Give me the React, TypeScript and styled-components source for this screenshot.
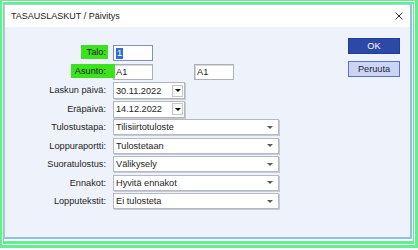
import React from "react";
import styled, { createGlobalStyle, css } from "styled-components";

const GlobalStyle = createGlobalStyle`
  html, body { margin: 0; padding: 0; background: #ffffff; }
  body { font-family: "Liberation Sans", Arial, sans-serif; color: #1e1e1e; }
  * { box-sizing: border-box; }
`;

const FRAME_GREEN = "#62ef8e";

const OuterFrame = styled.div`
  width: 418px;
  height: 248px;
  border-style: solid;
  border-color: ${FRAME_GREEN};
  border-width: 1px 3px 3px 2px;
  padding: 1px;
  background: #ffffff;
  display: flex;
`;

const InnerFrame = styled.div`
  flex: 1;
  display: flex;
  border-style: solid;
  border-color: ${FRAME_GREEN};
  border-width: 2px 1px 3px 1px;
  padding: 0 1px 2px 0;
  background: #ffffff;
`;

const Dialog = styled.div`
  flex: 1;
  display: flex;
  flex-direction: column;
  border-style: solid;
  border-color: #a9cbee #94bde6 #94bde6 #a9cbee;
  border-width: 1px 2px 2px 1px;
  background: #eef2fa;
`;

const TitleBar = styled.div`
  height: 22px;
  flex: none;
  background: #ffffff;
  display: flex;
  align-items: center;
  justify-content: space-between;
  padding: 0 7px 0 6px;
`;

const Title = styled.span`
  font-size: 9px;
  color: #1a1a1a;
`;

const CloseIcon = styled.svg`
  width: 8px;
  height: 8px;
  display: block;
`;

const Content = styled.div`
  flex: 1;
  display: flex;
  justify-content: space-between;
  padding: 0 10px 0 0;
`;

const Form = styled.div`
  margin-top: 18px;
  display: grid;
  grid-template-columns: 103px 166px;
  grid-auto-rows: 16px;
  column-gap: 5px;
  row-gap: 2.5px;
  align-content: start;
`;

const LabelCell = styled.div`
  display: flex;
  justify-content: flex-end;
  align-items: center;
  padding-right: 2px;
  font-size: 9.2px;
  color: #1e1e1e;
  white-space: nowrap;
`;

const Highlight = styled.span<{ $extend: number; $lead: number }>`
  position: relative;
  z-index: 1;
  align-self: flex-start;
  height: 14px;
  line-height: 14px;
  background: #3ce21e;
  padding: 0 ${(p) => p.$extend}px 0 ${(p) => p.$lead}px;
  margin-right: -${(p) => p.$extend}px;
`;

const FieldGroup = styled.div`
  display: flex;
  gap: 41px;
  align-items: flex-start;
`;

const TextBox = styled.div<{ $focused?: boolean }>`
  width: 40px;
  height: 16px;
  background: #ffffff;
  border: 1px solid ${(p) => (p.$focused ? "#7d90c8" : "#aeb0b4")};
  ${(p) =>
    !p.$focused &&
    css`
      box-shadow: inset 1px 1px 0 #d4d6da;
    `}
  display: flex;
  align-items: center;
  padding-left: 2px;
  font-size: 9.2px;
  color: #1e1e1e;
`;

const Selected = styled.span`
  background: #2f6fd6;
  color: #ffffff;
  padding: 0 1px;
  line-height: 11px;
`;

const DateCombo = styled.div`
  width: 72px;
  height: 17px;
  background: #ffffff;
  border: 1px solid #b2b5bb;
  box-shadow: 1px 1px 0 #c9ccd3;
  display: flex;
  align-items: center;
  justify-content: space-between;
  padding: 0 1px 0 2px;
  font-size: 9.2px;
`;

const DropButton = styled.div`
  width: 11px;
  height: 12px;
  border: 1px solid #c4c6ca;
  background: #fbfbfb;
  display: flex;
  align-items: center;
  justify-content: center;
`;

const Caret = styled.span<{ $color: string; $w: number }>`
  width: 0;
  height: 0;
  border-left: ${(p) => p.$w / 2}px solid transparent;
  border-right: ${(p) => p.$w / 2}px solid transparent;
  border-top: ${(p) => Math.round(p.$w / 2)}px solid ${(p) => p.$color};
`;

const SelectBox = styled.div`
  width: 166px;
  height: 16px;
  background: #ffffff;
  border: 1px solid #b6b9c2;
  box-shadow: 1px 1px 0 #c7cad2;
  display: flex;
  align-items: center;
  justify-content: space-between;
  padding: 0 5px 0 2px;
  font-size: 9.2px;
  color: #1e1e1e;
`;

const ButtonColumn = styled.div`
  margin-top: 11px;
  display: flex;
  flex-direction: column;
  gap: 7px;
`;

const Button = styled.div<{ $primary?: boolean }>`
  width: 52px;
  height: 16px;
  display: flex;
  align-items: center;
  justify-content: center;
  font-size: 9.2px;
  ${(p) =>
    p.$primary
      ? css`
          background: #2c49a8;
          border: 1px solid #223c97;
          color: #ffffff;
        `
      : css`
          background: #cbd5f1;
          border: 1px solid #5a73c0;
          color: #1c2340;
        `}
`;

const selects: [string, string][] = [
  ["Tulostustapa:", "Tilisiirtotuloste"],
  ["Loppuraportti:", "Tulostetaan"],
  ["Suoratulostus:", "Välikysely"],
  ["Ennakot:", "Hyvitä ennakot"],
  ["Lopputekstit:", "Ei tulosteta"],
];

export default function App() {
  return (
    <>
      <GlobalStyle />
      <OuterFrame>
        <InnerFrame>
          <Dialog>
            <TitleBar>
              <Title>TASAUSLASKUT / Päivitys</Title>
              <CloseIcon viewBox="0 0 8 8">
                <path d="M0.5 0.5 L7.5 7.5 M7.5 0.5 L0.5 7.5" stroke="#333" strokeWidth="1" fill="none" />
              </CloseIcon>
            </TitleBar>
            <Content>
              <Form>
                <LabelCell>
                  <Highlight $extend={2} $lead={6}>Talo:</Highlight>
                </LabelCell>
                <FieldGroup>
                  <TextBox $focused>
                    <Selected>1</Selected>
                  </TextBox>
                </FieldGroup>

                <LabelCell>
                  <Highlight $extend={9} $lead={4}>Asunto:</Highlight>
                </LabelCell>
                <FieldGroup>
                  <TextBox>A1</TextBox>
                  <TextBox>A1</TextBox>
                </FieldGroup>

                <LabelCell>Laskun päivä:</LabelCell>
                <FieldGroup>
                  <DateCombo>
                    30.11.2022
                    <DropButton>
                      <Caret $color="#111" $w={6} />
                    </DropButton>
                  </DateCombo>
                </FieldGroup>

                <LabelCell>Eräpäivä:</LabelCell>
                <FieldGroup>
                  <DateCombo>
                    14.12.2022
                    <DropButton>
                      <Caret $color="#111" $w={6} />
                    </DropButton>
                  </DateCombo>
                </FieldGroup>

                {selects.map(([label, value]) => (
                  <React.Fragment key={label}>
                    <LabelCell>{label}</LabelCell>
                    <SelectBox>
                      {value}
                      <Caret $color="#5a5a5a" $w={6} />
                    </SelectBox>
                  </React.Fragment>
                ))}
              </Form>
              <ButtonColumn>
                <Button $primary>OK</Button>
                <Button>Peruuta</Button>
              </ButtonColumn>
            </Content>
          </Dialog>
        </InnerFrame>
      </OuterFrame>
    </>
  );
}
